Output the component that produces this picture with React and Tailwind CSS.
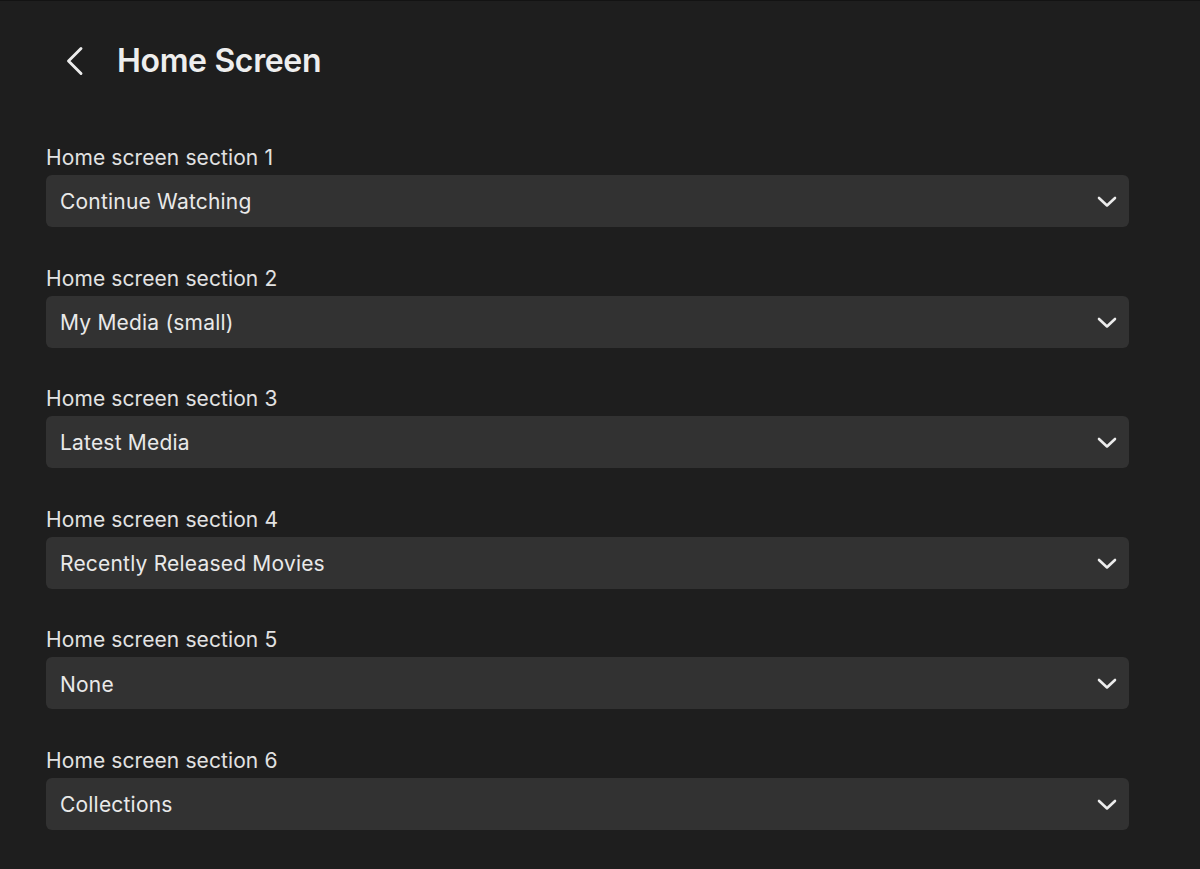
import { useState } from "react";

const sections = [
  "Continue Watching",
  "My Media (small)",
  "Latest Media",
  "Recently Released Movies",
  "None",
  "Collections",
];

function ChevronDown() {
  return (
    <svg width="20" height="12" viewBox="0 0 20 12" fill="none" className="shrink-0">
      <path d="M2 2 L10 9.5 L18 2" stroke="#ececec" strokeWidth="2.6" strokeLinecap="round" strokeLinejoin="round" />
    </svg>
  );
}

function ChevronLeft() {
  return (
    <svg width="20" height="30" viewBox="0 0 20 30" fill="none">
      <path d="M16 2.5 L3.5 15 L16 27.5" stroke="#ececec" strokeWidth="2.9" strokeLinecap="round" strokeLinejoin="round" />
    </svg>
  );
}

function SectionSelect({ index, value }) {
  return (
    <div className="flex flex-col">
      <label className="pt-[1px] text-[21px] leading-[28px] tracking-[0.1px] text-[#e2e2e2]">Home screen section {index}</label>
      <button className="mt-[3px] flex h-[52px] w-full items-center justify-between rounded-[6px] bg-[#323232] pl-[14px] pr-[12px] pt-[2px] text-left">
        <span className="text-[21px] tracking-[0.2px] text-[#e9e9e9]">{value}</span>
        <ChevronDown />
      </button>
    </div>
  );
}

export default function App() {
  const [values] = useState(sections);

  return (
    <div
      className="min-h-[869px] w-full border-t border-[#131313] bg-[#1e1e1e]"
      style={{ fontFamily: "Inter, 'Noto Sans', sans-serif" }}
    >
      <div className="w-[1129px] pl-[46px]">
        <div className="flex h-[121px] items-center pb-[1px]">
          <button className="ml-[19px] flex items-center">
            <ChevronLeft />
          </button>
          <h1 className="ml-[32px] text-[32px] font-semibold tracking-[-0.35px] text-[#eeeeee]">Home Screen</h1>
        </div>
        <div className="mt-[21px] flex flex-col gap-[36.6px]">
          {values.map((v, i) => (
            <SectionSelect key={i} index={i + 1} value={v} />
          ))}
        </div>
      </div>
    </div>
  );
}
